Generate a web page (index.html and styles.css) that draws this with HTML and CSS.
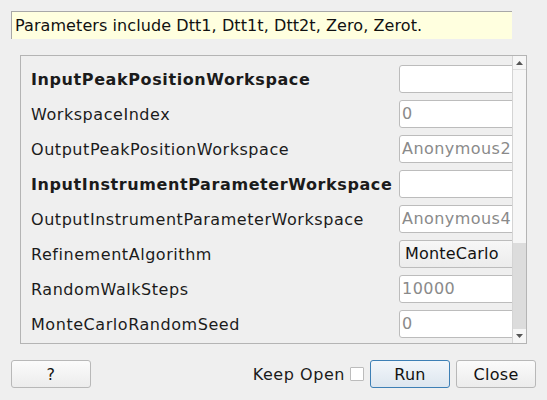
FILE: index.html
```html
<!DOCTYPE html>
<html>
<head>
<meta charset="utf-8">
<link rel="stylesheet" href="styles.css">
</head>
<body>
<div class="dialog">
  <div class="desc">Parameters include Dtt1, Dtt1t, Dtt2t, Zero, Zerot.</div>
  <div class="panel">
    <div class="content">
      <div class="row"><span class="label bold">InputPeakPositionWorkspace</span><span class="field"></span></div>
      <div class="row"><span class="label">WorkspaceIndex</span><span class="field ph">0</span></div>
      <div class="row"><span class="label">OutputPeakPositionWorkspace</span><span class="field ph">Anonymous2</span></div>
      <div class="row"><span class="label bold">InputInstrumentParameterWorkspace</span><span class="field"></span></div>
      <div class="row"><span class="label">OutputInstrumentParameterWorkspace</span><span class="field ph">Anonymous4</span></div>
      <div class="row"><span class="label">RefinementAlgorithm</span><span class="field combo">MonteCarlo</span></div>
      <div class="row"><span class="label">RandomWalkSteps</span><span class="field ph">10000</span></div>
      <div class="row"><span class="label">MonteCarloRandomSeed</span><span class="field ph">0</span></div>
    </div>
    <div class="scrollbar">
      <div class="arrow up"><svg width="7" height="4" viewBox="0 0 7 4"><path d="M0 4 L3.5 0 L7 4 Z" fill="#555"/></svg></div>
      <div class="track"><div class="handle"></div></div>
      <div class="arrow down"><svg width="7" height="4" viewBox="0 0 7 4"><path d="M0 0 L3.5 4 L7 0 Z" fill="#555"/></svg></div>
    </div>
  </div>
  <div class="buttons">
    <button class="btn help">?</button>
    <div class="spacer"></div>
    <span class="keep">Keep Open</span>
    <span class="check"></span>
    <button class="btn run">Run</button>
    <button class="btn close">Close</button>
  </div>
</div>
</body>
</html>
```
FILE: styles.css
```css
* { box-sizing: border-box; }
html, body { margin: 0; padding: 0; }
body {
  width: 547px;
  height: 400px;
  background: #efefef;
  font-family: "DejaVu Sans", sans-serif;
  font-size: 16px;
  color: #1b1b1b;
  overflow: hidden;
}
.dialog {
  padding: 11px 0 0 11px;
}
.desc {
  width: 501px;
  height: 28px;
  background: #ffffdf;
  border-top: 1px solid #a8a8a8;
  border-left: 1px solid #a8a8a8;
  padding-left: 3px;
  line-height: 27px;
  color: #111;
  letter-spacing: 0.08px;
}
.panel {
  margin: 16px 0 0 9px;
  width: 507px;
  height: 289px;
  border: 1px solid #b4b4b4;
  display: flex;
}
.content {
  flex: 1;
  overflow: hidden;
  padding: 9px 0 0 10px;
  display: flex;
  flex-direction: column;
  gap: 7px;
}
.row {
  display: grid;
  grid-template-columns: 368px 125px;
  height: 28px;
  align-items: center;
}
.label { white-space: nowrap; letter-spacing: 0.55px; }
.bold { font-weight: bold; letter-spacing: 0.6px; }
.field {
  height: 28px;
  border: 1px solid #bcbcbc;
  border-radius: 3px;
  background: #fff;
  padding-left: 2px;
  line-height: 26px;
  white-space: nowrap;
  overflow: hidden;
}
.ph { color: #8a8a8a; letter-spacing: 0.45px; }
.combo {
  background: linear-gradient(#f7f7f7, #ececec);
  color: #111;
  padding-left: 5px;
  letter-spacing: 0.2px;
}
.scrollbar {
  width: 14px;
  border-left: 1px solid #d4d4d4;
  background: #f6f6f6;
  display: flex;
  flex-direction: column;
}
.arrow {
  height: 14px;
  display: flex;
  align-items: center;
  justify-content: center;
}
.arrow.up { border-bottom: 1px solid #dedede; }
.track {
  flex: 1;
  display: flex;
  flex-direction: column;
  justify-content: flex-end;
}
.handle {
  height: 86px;
  background: #dcdcdc;
}
.buttons {
  margin-top: 16px;
  width: 525px;
  height: 28px;
  display: flex;
  align-items: center;
}
.spacer { flex: 1; }
.btn {
  font-family: "DejaVu Sans", sans-serif;
  font-size: 16px;
  color: #111;
  height: 28px;
  width: 80px;
  border: 1px solid #b8b8b8;
  border-radius: 3px;
  background: linear-gradient(#fbfbfb, #ececec);
  padding: 0;
  letter-spacing: 0.3px;
}
.help { width: 80px; }
.keep { margin-right: 5px; letter-spacing: 0.55px; }
.check {
  width: 14px;
  height: 14px;
  border: 1px solid #bcbcbc;
  background: #fff;
  border-radius: 1px;
  margin-right: 6px;
}
.run {
  border-color: #3d7fb5;
  background: linear-gradient(#f2f6fa, #dde6ef);
  margin-right: 6px;
}
.close { }
```
